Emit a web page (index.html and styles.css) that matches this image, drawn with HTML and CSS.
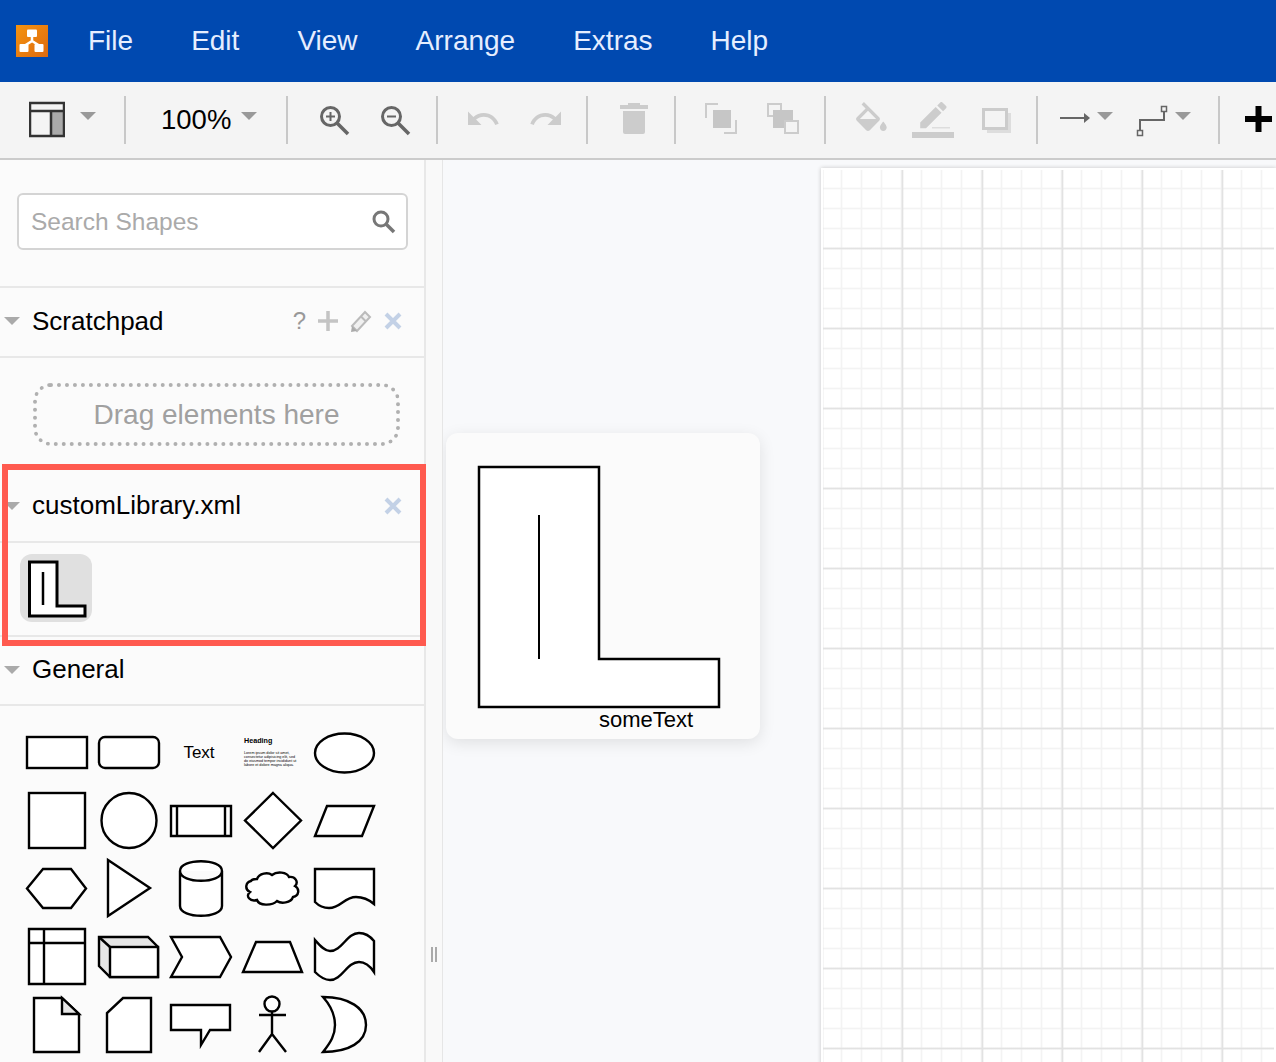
FILE: index.html
```html
<!DOCTYPE html>
<html lang="en">
<head>
    <meta charset="UTF-8">
    <meta name="viewport" content="width=device-width, initial-scale=1.0">
    <title>draw.io</title>
    <link rel="stylesheet" href="styles.css">
</head>
<body>
    <div class="menubar">
        <svg class="logo" width="32" height="32" viewBox="0 0 32 32">
            <defs>
                <linearGradient id="logoFill" x1="0" y1="0" x2="1" y2="1">
                    <stop offset="0" stop-color="#f5930f"/>
                    <stop offset="1" stop-color="#dd6a10"/>
                </linearGradient>
            </defs>
            <rect width="32" height="32" fill="url(#logoFill)"/>
            <path d="M16 10 V16 L8 21 M16 16 L24 21" stroke="#fff" stroke-width="2.5" fill="none"/>
            <rect x="11" y="4.5" width="10" height="7.5" rx="1" fill="#fff"/>
            <rect x="3.5" y="19" width="9" height="8" rx="1" fill="#fff"/>
            <rect x="18.5" y="19" width="9" height="8" rx="1" fill="#fff"/>
        </svg>
        <span class="menu-item">File</span>
        <span class="menu-item">Edit</span>
        <span class="menu-item">View</span>
        <span class="menu-item">Arrange</span>
        <span class="menu-item">Extras</span>
        <span class="menu-item">Help</span>
    </div>

    <div class="toolbar">
        <div class="group g-view">
            <svg width="36" height="48" viewBox="0 0 36 48">
                <rect x="22" y="15" width="13" height="25" fill="#aaa"/>
                <path d="M1 7 H35 V40 H1 Z M1 15 H35 M22 15 V40" fill="none" stroke="#333" stroke-width="2.5"/>
            </svg>
            <span class="caret"></span>
        </div>
        <span class="sep"></span>
        <div class="group g-zoom">
            <span class="zoom-value">100%</span>
            <span class="caret"></span>
        </div>
        <span class="sep"></span>
        <div class="group g-lens">
            <svg width="30" height="48" viewBox="0 0 30 48" fill="none" stroke="#666">
                <circle cx="10.5" cy="20.5" r="9" stroke-width="3"/>
                <path d="M17 27 L28 38" stroke-width="3.5"/>
                <path d="M10.5 16 V25 M6 20.5 H15" stroke-width="2"/>
            </svg>
            <svg width="30" height="48" viewBox="0 0 30 48" fill="none" stroke="#666">
                <circle cx="10.5" cy="20.5" r="9" stroke-width="3"/>
                <path d="M17 27 L28 38" stroke-width="3.5"/>
                <path d="M6 20.5 H15" stroke-width="2"/>
            </svg>
        </div>
        <span class="sep"></span>
        <div class="group g-undo">
            <svg width="32" height="48" viewBox="0 0 32 48" fill="#ccc">
                <path transform="translate(-2,5) scale(1.5)" d="M12.5 8c-2.65 0-5.05.99-6.9 2.6L2 7v9h9l-3.62-3.62c1.39-1.16 3.16-1.88 5.12-1.88 3.54 0 6.55 2.31 7.6 5.5l2.37-.78C21.08 11.03 17.15 8 12.5 8z"/>
            </svg>
            <svg width="32" height="48" viewBox="0 0 32 48" fill="#ccc">
                <path transform="translate(-2,5) scale(1.5)" d="M18.4 10.6C16.55 8.99 14.15 8 11.5 8c-4.65 0-8.58 3.03-9.96 7.22L3.9 16c1.05-3.19 4.05-5.5 7.6-5.5 1.95 0 3.73.72 5.12 1.88L13 16h9V7l-3.6 3.6z"/>
            </svg>
        </div>
        <span class="sep"></span>
        <div class="group g-trash">
            <svg width="28" height="48" viewBox="0 0 28 48" fill="#ccc">
                <rect x="8" y="7" width="12" height="3"/>
                <rect x="0" y="9" width="28" height="4"/>
                <path d="M3 15 H25 V36 Q25 38 23 38 H5 Q3 38 3 36 Z"/>
            </svg>
        </div>
        <span class="sep"></span>
        <div class="group g-order">
            <svg width="32" height="48" viewBox="0 0 32 48">
                <rect x="8" y="14" width="18" height="18" fill="#c6c6c6"/>
                <path d="M13 8 H1 V22 M31 24 V37 H19" fill="none" stroke="#ccc" stroke-width="2"/>
            </svg>
            <svg width="32" height="48" viewBox="0 0 32 48">
                <rect x="1" y="8" width="13" height="12" fill="none" stroke="#ccc" stroke-width="2"/>
                <rect x="6" y="14" width="20" height="18" fill="#c6c6c6"/>
                <rect x="18" y="25" width="13" height="12" fill="#f4f4f4" stroke="#ccc" stroke-width="2"/>
            </svg>
        </div>
        <span class="sep"></span>
        <div class="group g-style">
            <svg width="32" height="48" viewBox="0 0 32 48" fill="#ccc">
                <path transform="translate(-5,6) scale(1.7)" d="M16.56 8.94L7.62 0 6.21 1.41l2.38 2.38-5.15 5.15c-.59.59-.59 1.54 0 2.12l5.5 5.5c.29.29.68.44 1.06.44s.77-.15 1.06-.44l5.5-5.5c.59-.58.59-1.53 0-2.12zM5.21 10L10 5.21 14.79 10H5.21zM19 11.5s-2 2.17-2 3.5c0 1.1.9 2 2 2s2-.9 2-2c0-1.33-2-3.5-2-3.5z"/>
            </svg>
            <svg width="42" height="48" viewBox="0 0 42 48" fill="#ccc">
                <path transform="translate(2,6) scale(1.55)" d="M17.75 7L14 3.25l-10 10V17h3.75l10-10zm2.96-2.96c.39-.39.39-1.02 0-1.41L18.37.29c-.39-.39-1.02-.39-1.41 0L15 2.25 18.75 6l1.96-1.96z"/>
                <rect x="20" y="31" width="18" height="1.5" fill="#ddd"/>
                <rect x="0" y="36" width="42" height="6"/>
            </svg>
            <svg width="34" height="48" viewBox="0 0 34 48">
                <rect x="9" y="17" width="24" height="20" fill="#ddd"/>
                <rect x="5.5" y="13.5" width="23" height="19" fill="#f4f4f4" stroke="#ccc" stroke-width="3"/>
            </svg>
        </div>
        <span class="sep"></span>
        <div class="group g-line">
            <svg width="30" height="48" viewBox="0 0 30 48">
                <path d="M0 22 H26" stroke="#666" stroke-width="2"/>
                <path d="M24 17 L30 22 L24 27 Z" fill="#666"/>
            </svg>
            <span class="caret"></span>
            <svg width="48" height="48" viewBox="0 0 48 48" fill="none" stroke="#666">
                <path d="M44 16 V24 H20 V34" stroke-width="2"/>
                <rect x="41.5" y="10.5" width="5" height="5" stroke-width="1.5"/>
                <rect x="17.5" y="34.5" width="5" height="5" stroke-width="1.5"/>
            </svg>
            <span class="caret"></span>
        </div>
        <span class="sep"></span>
        <div class="group g-insert">
            <svg width="27" height="48" viewBox="0 0 27 48">
                <path d="M13.5 10 V36 M0 23 H27" stroke="#000" stroke-width="6"/>
            </svg>
        </div>
    </div>

    <div class="workspace">
        <div class="sidebar">
            <div class="search-block">
                <div class="search-box">
                    <span class="search-hint">Search Shapes</span>
                    <svg width="26" height="26" viewBox="0 0 26 26" fill="none" stroke="#777">
                        <circle cx="10" cy="10" r="7" stroke-width="3"/>
                        <path d="M15 15 L23 23" stroke-width="3.5"/>
                    </svg>
                </div>
            </div>

            <div class="section-head">
                <span class="tri"></span>
                <span class="section-title">Scratchpad</span>
                <div class="head-actions">
                    <span class="help-mark">?</span>
                    <svg width="20" height="22" viewBox="0 0 20 22"><path d="M10 1 V21 M0 11 H20" stroke="#c4c4c4" stroke-width="3.5"/></svg>
                    <svg width="22" height="24" viewBox="0 0 22 24">
                        <path d="M2 17 L15 3 L20 8 L7 22 Z M11 7.5 L16 12.5" fill="#f0f0f0" stroke="#bbb" stroke-width="2"/>
                        <path d="M1 23 L2 17 L7 22 Z" fill="#aaa"/>
                    </svg>
                    <svg class="close-x" width="18" height="18" viewBox="0 0 18 18"><path d="M2 2 L16 16 M16 2 L2 16" stroke="#c3d1e6" stroke-width="4"/></svg>
                </div>
            </div>
            <div class="scratch-body">
                <div class="dropzone">Drag elements here</div>
            </div>

            <div class="library">
                <div class="library-head">
                    <span class="tri"></span>
                    <span class="section-title">customLibrary.xml</span>
                    <div class="head-actions">
                        <svg class="close-x" width="18" height="18" viewBox="0 0 18 18"><path d="M2 2 L16 16 M16 2 L2 16" stroke="#c3d1e6" stroke-width="4"/></svg>
                    </div>
                </div>
                <div class="library-body">
                    <div class="library-item">
                        <svg width="72" height="68" viewBox="0 0 72 68">
                            <path d="M9.5 8 H37 V52 H65 V62 H9.5 Z" fill="#fff" stroke="#000" stroke-width="3"/>
                            <path d="M23 18 V51" stroke="#000" stroke-width="2.5"/>
                        </svg>
                    </div>
                </div>
                <div class="highlight"></div>
            </div>

            <div class="general-head">
                <span class="tri"></span>
                <span class="section-title">General</span>
            </div>
            <div class="shapes">
                <svg viewBox="0 0 72 68"><rect x="6" y="19" width="60" height="31"/></svg>
                <svg viewBox="0 0 72 68"><rect x="6" y="19" width="60" height="31" rx="6"/></svg>
                <svg viewBox="0 0 72 68"><text class="shape-text" x="34" y="40">Text</text></svg>
                <svg viewBox="0 0 72 68">
                    <text class="shape-heading" x="7" y="25">Heading</text>
                    <text class="shape-lorem" x="7" y="35.5">Lorem ipsum dolor sit amet,</text>
                    <text class="shape-lorem" x="7" y="39.5">consectetur adipisicing elit, sed</text>
                    <text class="shape-lorem" x="7" y="43.5">do eiusmod tempor incididunt ut</text>
                    <text class="shape-lorem" x="7" y="47.5">labore et dolore magna aliqua.</text>
                </svg>
                <svg viewBox="0 0 72 68"><ellipse cx="35.5" cy="35" rx="29.5" ry="19.5"/></svg>

                <svg viewBox="0 0 72 68"><rect x="8" y="7" width="56" height="55"/></svg>
                <svg viewBox="0 0 72 68"><circle cx="36" cy="34.5" r="27.5"/></svg>
                <svg viewBox="0 0 72 68"><path d="M6 20 H66 V50 H6 Z M12 20 V50 M60 20 V50"/></svg>
                <svg viewBox="0 0 72 68"><path d="M36 7 L64 34.5 L36 62 L8 34.5 Z"/></svg>
                <svg viewBox="0 0 72 68"><path d="M18 20 H65 L53 50 H6 Z"/></svg>

                <svg viewBox="0 0 72 68"><path d="M22 15 H50 L65 34.5 L50 54 H22 L6 34.5 Z"/></svg>
                <svg viewBox="0 0 72 68"><path d="M15 6 L57 34 L15 62 Z"/></svg>
                <svg viewBox="0 0 72 68"><path d="M15 17 C15 4 57 4 57 17 V52 C57 65 15 65 15 52 Z M15 17 C15 30 57 30 57 17"/></svg>
                <svg viewBox="0 0 72 68"><path d="M20 25 C22 19 31 18 35 21 C40 17 50 18 52 23 C58 22 62 28 58 32 C63 35 62 42 56 43 C54 49 44 50 40 47 C35 52 22 52 20 46 C13 48 8 42 13 38 C7 35 9 28 14 27 C15 25 18 25 20 25 Z"/></svg>
                <svg viewBox="0 0 72 68"><path d="M6 15 H65 V50 C58 44 52 43 47 43 C35 43 32 54 20 54 C15 54 10 52 6 48 Z"/></svg>

                <svg viewBox="0 0 72 68"><path d="M8 7 H64 V62 H8 Z M23 7 V62 M8 21 H64"/></svg>
                <svg viewBox="0 0 72 68">
                    <path class="shade" d="M6 15 H55 L65 25 V55 H17 L6 44 Z"/>
                    <rect x="17" y="25" width="48" height="30"/>
                    <path d="M6 15 L17 25"/>
                </svg>
                <svg viewBox="0 0 72 68"><path d="M6 15 H55 L66 35 L55 55 H6 L17 35 Z"/></svg>
                <svg viewBox="0 0 72 68"><path d="M19 20 H53 L65 50 H6 Z"/></svg>
                <svg viewBox="0 0 72 68"><path d="M6 18 C12 25 16 29 21 29 C33 29 38 11 50 11 C56 11 61 14 65 19 V50 C61 44 56 40 50 40 C38 40 33 58 21 58 C16 58 12 56 6 50 Z"/></svg>

                <svg viewBox="0 0 72 68">
                    <path d="M13 8 H41 L58 24 V62 H13 Z"/>
                    <path class="shade" d="M41 8 V24 H58 Z"/>
                </svg>
                <svg viewBox="0 0 72 68"><path d="M30 8 H58 V62 H14 V23 Z"/></svg>
                <svg viewBox="0 0 72 68"><path d="M6 15 H65 V40 H45 L36 55 V40 H6 Z"/></svg>
                <svg viewBox="0 0 72 68">
                    <circle cx="35" cy="14" r="7.5"/>
                    <path d="M35 21.5 V44 M22 25 H49 M22 62 L35 44 L49 62" fill="none"/>
                </svg>
                <svg viewBox="0 0 72 68"><path d="M14 7 C40 7 57 18 57 35 C57 52 40 62 14 62 C22 52 26 45 26 35 C26 24 22 16 14 7 Z"/></svg>
            </div>
        </div>

        <div class="splitter"><span class="grip"></span></div>

        <div class="canvas">
            <div class="page"></div>
            <div class="preview">
                <svg width="314" height="306" viewBox="0 0 314 306">
                    <path d="M33 34 H153 V226 H273 V274 H33 Z" fill="#fff" stroke="#000" stroke-width="2.5"/>
                    <path d="M93 82 V226" stroke="#000" stroke-width="2"/>
                    <text class="preview-label" x="153" y="294">someText</text>
                </svg>
            </div>
        </div>
    </div>
</body>
</html>
```

FILE: styles.css
```css
html, body{
    margin: 0;
    height: 100%;
}
body{
    display: flex;
    flex-direction: column;
    height: 1062px;
    overflow: hidden;
    font-family: "Liberation Sans", Arial, sans-serif;
    background-color: #f8f9fb;
}

/* top menu */
.menubar{
    display: flex;
    align-items: center;
    flex: 0 0 82px;
    padding-left: 16px;
    background-color: #0049b0;
    color: #e6eeff;
    font-size: 28px;
}
.logo{
    margin-right: 40px;
}
.menu-item{
    margin-right: 58px;
}

/* toolbar */
.toolbar{
    display: flex;
    align-items: center;
    flex: 0 0 78px;
    box-sizing: border-box;
    border-bottom: 2px solid #cbcbcb;
    background-color: #f4f4f4;
    overflow: hidden;
}
.toolbar svg{
    display: block;
    flex: none;
}
.group{
    display: flex;
    align-items: center;
    flex: none;
    box-sizing: border-box;
    height: 48px;
}
.sep{
    flex: none;
    width: 2px;
    height: 48px;
    background-color: #c8c8c8;
}
.caret{
    flex: none;
    width: 0;
    height: 0;
    margin-bottom: 8px;
    border-top: 8px solid #999;
    border-left: 8.5px solid transparent;
    border-right: 8.5px solid transparent;
}
.g-view{ width: 124px; padding-left: 29px; gap: 15px; }
.g-zoom{ width: 160px; padding-left: 35px; gap: 10px; }
.g-lens{ width: 148px; padding-left: 32px; gap: 31px; }
.g-undo{ width: 148px; padding-left: 29px; gap: 31px; }
.g-trash{ width: 86px; padding-left: 32px; }
.g-order{ width: 148px; padding-left: 29px; gap: 30px; }
.g-style{ width: 210px; padding-left: 30px; gap: 24px; }
.g-line{ width: 180px; padding-left: 22px; gap: 7px; }
.g-insert{ padding-left: 25px; }
.zoom-value{
    font-size: 27.5px;
    color: #000;
}

/* main area */
.workspace{
    display: flex;
    flex: 1;
    min-height: 0;
}
.sidebar{
    flex: 0 0 426px;
    background-color: #fbfbfb;
    box-shadow: inset -2px 0 0 #e8e8e8;
    overflow: hidden;
}
.search-block{
    box-sizing: border-box;
    height: 126px;
    padding: 33px 0 0 17px;
}
.search-box{
    display: flex;
    align-items: center;
    justify-content: space-between;
    box-sizing: border-box;
    width: 391px;
    height: 57px;
    padding: 0 9px 0 12px;
    border: 2px solid #d4d4d4;
    border-radius: 6px;
    background-color: #fff;
}
.search-hint{
    font-size: 24.5px;
    color: #aaa;
}
.section-head, .library-head, .general-head{
    display: flex;
    align-items: center;
    box-sizing: border-box;
    width: 424px;
    padding: 0 0 2px 4px;
}
.section-head{
    height: 70px;
    border-top: 2px solid #e8e8e8;
}
.library-head{
    height: 69px;
}
.general-head{
    height: 69px;
    border-top: 2px solid #e8e8e8;
}
.tri{
    flex: none;
    width: 0;
    height: 0;
    margin: 0 12px 0 0;
    border-top: 8px solid #aaa;
    border-left: 8px solid transparent;
    border-right: 8px solid transparent;
}
.section-title{
    font-size: 26px;
    color: #000;
}
.head-actions{
    display: flex;
    align-items: center;
    gap: 12px;
    margin-left: auto;
    padding-right: 22px;
}
.help-mark{
    font-size: 24px;
    color: #999;
}
.scratch-body{
    box-sizing: border-box;
    width: 424px;
    height: 116px;
    padding: 25px 0 0 33px;
    border-top: 2px solid #e8e8e8;
}
.dropzone{
    box-sizing: border-box;
    width: 367px;
    height: 63px;
    border: 4px dotted #b0b0b0;
    border-radius: 18px;
    font-size: 28px;
    line-height: 55px;
    text-align: center;
    color: #a0a0a0;
}
.library{
    position: relative;
}
.library-body{
    box-sizing: border-box;
    width: 424px;
    height: 94px;
    padding: 11px 0 0 20px;
    border-top: 2px solid #e8e8e8;
}
.library-item{
    width: 72px;
    height: 68px;
    border-radius: 12px;
    background-color: #e0e0e0;
}
.library-item svg{
    display: block;
}
.highlight{
    position: absolute;
    top: -8px;
    left: 2px;
    box-sizing: border-box;
    width: 424px;
    height: 182px;
    border: 6px solid #ff5a4f;
    pointer-events: none;
}

/* shape palette */
.shapes{
    display: grid;
    grid-template-columns: repeat(5, 72px);
    grid-auto-rows: 68px;
    width: 403px;
    padding: 12px 0 0 21px;
    border-top: 2px solid #e8e8e8;
}
.shapes svg{
    display: block;
    width: 72px;
    height: 68px;
    fill: #fff;
    stroke: #000;
    stroke-width: 2.4;
}
.shapes .shade{
    fill: #e6e6e6;
}
.shapes text{
    fill: #000;
    stroke: none;
}
.shape-text{
    font-size: 17px;
    text-anchor: middle;
}
.shape-heading{
    font-size: 7.2px;
    font-weight: bold;
}
.shape-lorem{
    font-size: 3.7px;
}

/* splitter and drawing area */
.splitter{
    display: flex;
    align-items: flex-start;
    justify-content: center;
    flex: 0 0 17px;
    padding-top: 787px;
    box-sizing: border-box;
    border-right: 1px solid #e6e6e6;
    background-color: #f9f9f9;
}
.grip{
    width: 2px;
    height: 15px;
    border-left: 2px solid #aaa;
    border-right: 2px solid #aaa;
    margin-right: 1px;
}
.canvas{
    position: relative;
    flex: 1;
    padding: 8px 0 0 378px;
    background-color: #f8f9fb;
    overflow: hidden;
}
.page{
    height: 1000px;
    border: 2px solid #fff;
    background-color: #fff;
    background-clip: padding-box;
    background-image:
        linear-gradient(to right, transparent 0, #e2e2e2 1.5px, transparent 3px),
        linear-gradient(to bottom, transparent 0, #e2e2e2 1.5px, transparent 3px),
        linear-gradient(to right, transparent 0, #f3f3f3 1.5px, transparent 3px),
        linear-gradient(to bottom, transparent 0, #f3f3f3 1.5px, transparent 3px);
    background-size: 80px 80px, 80px 80px, 20px 20px, 20px 20px;
    background-position: 78px 0, 0 77px, 17px 0, 0 17px;
    box-shadow: 0 0 4px #c4c4c4;
}
.preview{
    position: absolute;
    top: 273px;
    left: 3px;
    width: 314px;
    height: 306px;
    border-radius: 12px;
    background-color: #fbfbfb;
    box-shadow: 0 4px 16px rgba(0, 0, 0, 0.1);
}
.preview svg{
    display: block;
}
.preview-label{
    font-size: 22px;
    fill: #000;
}
```
